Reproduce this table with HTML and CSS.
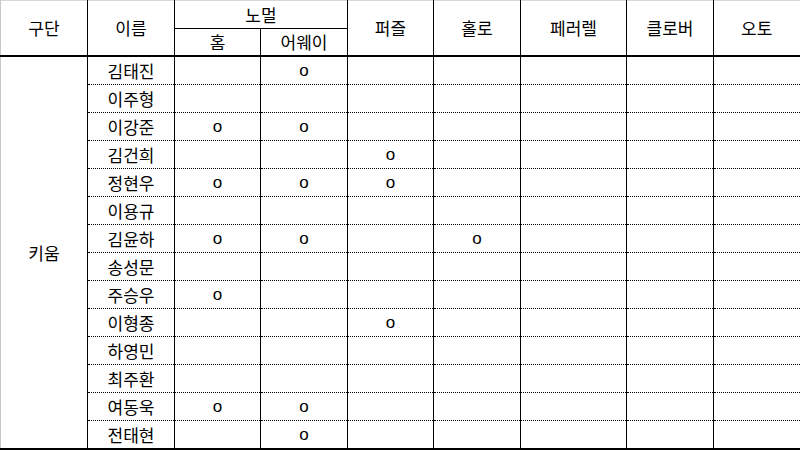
FILE: index.html
```html
<!DOCTYPE html>
<html lang="ko">
<head>
<meta charset="utf-8">
<title>구단 표</title>
<link rel="stylesheet" href="styles.css">
</head>
<body>
<table class="sheet">
  <colgroup>
    <col class="c87"><col class="c87"><col class="c86"><col class="c87"><col class="c86"><col class="c87"><col class="c106"><col class="c87"><col class="c87">
  </colgroup>
  <thead>
    <tr class="h1">
      <th rowspan="2">구단</th>
      <th rowspan="2">이름</th>
      <th colspan="2" class="group">노멀</th>
      <th rowspan="2">퍼즐</th>
      <th rowspan="2">홀로</th>
      <th rowspan="2">페러렐</th>
      <th rowspan="2">클로버</th>
      <th rowspan="2">오토</th>
    </tr>
    <tr class="h2">
      <th>홈</th>
      <th>어웨이</th>
    </tr>
  </thead>
  <tbody>
    <tr><td rowspan="14" class="team">키움</td><td>김태진</td><td></td><td class="o">o</td><td></td><td></td><td></td><td></td><td></td></tr>
    <tr><td>이주형</td><td></td><td></td><td></td><td></td><td></td><td></td><td></td></tr>
    <tr><td>이강준</td><td class="o">o</td><td class="o">o</td><td></td><td></td><td></td><td></td><td></td></tr>
    <tr><td>김건희</td><td></td><td></td><td class="o">o</td><td></td><td></td><td></td><td></td></tr>
    <tr><td>정현우</td><td class="o">o</td><td class="o">o</td><td class="o">o</td><td></td><td></td><td></td><td></td></tr>
    <tr><td>이용규</td><td></td><td></td><td></td><td></td><td></td><td></td><td></td></tr>
    <tr><td>김윤하</td><td class="o">o</td><td class="o">o</td><td></td><td class="o">o</td><td></td><td></td><td></td></tr>
    <tr><td>송성문</td><td></td><td></td><td></td><td></td><td></td><td></td><td></td></tr>
    <tr><td>주승우</td><td class="o">o</td><td></td><td></td><td></td><td></td><td></td><td></td></tr>
    <tr><td>이형종</td><td></td><td></td><td class="o">o</td><td></td><td></td><td></td><td></td></tr>
    <tr><td>하영민</td><td></td><td></td><td></td><td></td><td></td><td></td><td></td></tr>
    <tr><td>최주환</td><td></td><td></td><td></td><td></td><td></td><td></td><td></td></tr>
    <tr><td>여동욱</td><td class="o">o</td><td class="o">o</td><td></td><td></td><td></td><td></td><td></td></tr>
    <tr class="last"><td>전태현</td><td></td><td class="o">o</td><td></td><td></td><td></td><td></td><td></td></tr>
  </tbody>
</table>
</body>
</html>
```

FILE: styles.css
```css
html, body {
  margin: 0;
  padding: 0;
  background: #fff;
}

.sheet {
  border-collapse: collapse;
  table-layout: fixed;
  width: 800px;
  font-family: "Noto Sans CJK KR", "Noto Sans", sans-serif;
  font-size: 17px;
  color: #000;
  border-top: 1px solid #d8d8d8;
  border-left: 1px solid #c8c8c8;
  border-right: 2px solid #000;
  border-bottom: 3px solid #000;
}

.c87 { width: 87px; }
.c86 { width: 86px; }
.c106 { width: 106px; }

.sheet th,
.sheet td {
  padding: 0;
  text-align: center;
  vertical-align: middle;
  font-weight: normal;
  line-height: 20px;
  border-left: 1px solid #000;
  border-right: 1px solid #000;
}

.sheet th:first-child,
.sheet .team {
  border-left: 1px solid #c8c8c8;
}

.h1 th { height: 27px; }
.h2 th { height: 26px; }

.group {
  border-bottom: 1px solid #000;
}

.h2 th,
.h1 th[rowspan="2"] {
  border-bottom: 2px solid #000;
}

.sheet tbody td {
  height: 27px;
  border-top: 1px dotted #000;
}

.sheet tbody tr:first-child td {
  border-top: 2px solid #000;
}

.sheet tbody .team {
  border-top: 2px solid #000;
}

.o {
  font-family: "Liberation Sans", Arial, sans-serif;
  font-size: 17px;
  line-height: 18px;
}
```
